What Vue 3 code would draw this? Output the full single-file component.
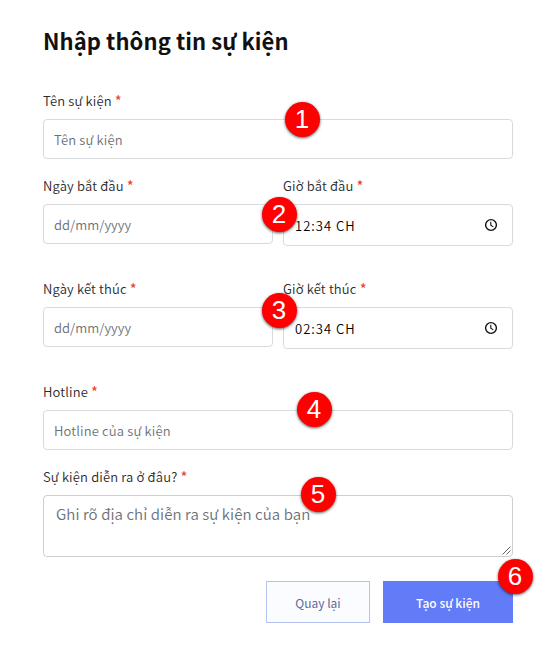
<script setup>
const rows = [
  { date: 'Ngày bắt đầu', time: 'Giờ bắt đầu', value: '12:34 CH', step: 2 },
  { date: 'Ngày kết thúc', time: 'Giờ kết thúc', value: '02:34 CH', step: 3 },
]
</script>

<template>
  <main class="page">
    <h1><span>Nhập thông tin sự kiện</span></h1>
    <form>
      <div class="field name">
        <label>Tên sự kiện <b>*</b></label>
        <div class="control placeholder">Tên sự kiện</div>
        <i class="badge b1">1</i>
      </div>
      <div v-for="row in rows" :key="row.step" class="row">
        <div class="field">
          <label>{{ row.date }} <b>*</b></label>
          <div class="control placeholder date">dd/mm/yyyy</div>
          <i class="badge" :class="'b' + row.step">{{ row.step }}</i>
        </div>
        <div class="field">
          <label>{{ row.time }} <b>*</b></label>
          <div class="control time">
            <span>{{ row.value }}</span>
            <svg width="14" height="14" viewBox="0 0 14 14" fill="none" stroke="#111">
              <circle cx="7" cy="7" r="5.4" stroke-width="1.4" />
              <path d="M6.8 3.7V7.3L9.3 8.9" stroke-width="1.1" />
            </svg>
          </div>
        </div>
      </div>
      <div class="field hotline">
        <label>Hotline <b>*</b></label>
        <div class="control placeholder">Hotline của sự kiện</div>
        <i class="badge b4">4</i>
      </div>
      <div class="field">
        <label class="place">Sự kiện diễn ra ở đâu? <b>*</b></label>
        <div class="control area">
          <span>Ghi rõ địa chỉ diễn ra sự kiện của bạn</span>
          <svg class="grip" width="9" height="9" viewBox="0 0 9 9" stroke="#555" fill="none">
            <path d="M.5 8.5L8.5 .5M4.5 8.5L8.5 4.5" stroke-width=".9" />
          </svg>
        </div>
        <i class="badge b5">5</i>
      </div>
      <div class="actions">
        <button type="button" class="back">Quay lại</button>
        <button type="button" class="create">Tạo sự kiện</button>
        <i class="badge b6">6</i>
      </div>
    </form>
  </main>
</template>

<style>
body { margin: 0; background: #fff; }
</style>

<style scoped>
* { box-sizing: border-box; }
.page {
  width: 556px;
  height: 646px;
  padding: 22px 43px 0;
  font-family: "Noto Sans CJK SC", "Noto Sans", sans-serif;
  font-size: 13px;
  font-weight: 350;
  letter-spacing: .16px;
  color: #2b2b2b;
  white-space: nowrap;
}
h1 {
  margin: 0 0 33px;
  height: 36px;
  font-size: 22px;
  line-height: 36px;
  font-weight: 700;
  letter-spacing: .08px;
  color: #111;
}
.field { position: relative; }
label { display: block; height: 20px; line-height: 20px; margin-bottom: 8px; }
label b { display: inline-block; color: #f03a2e; font-weight: 400; font-size: 15px; line-height: 1; transform: translateY(1px); }
.control {
  display: flex;
  align-items: center;
  height: 40px;
  padding: 0 10px;
  border: 1px solid #d9dadc;
  border-radius: 4px;
  background: #fff;
}
.placeholder { color: #6c7178; }
.date { letter-spacing: .05px; }
.name { margin-bottom: 17px; }
.row { display: grid; grid-template-columns: 230px 230px; gap: 10px; height: 103px; }
.time { height: 42px; padding: 1px 14px 0 11px; justify-content: space-between; color: #000; letter-spacing: 1px; }
.time svg { margin-top: -2px; }
.hotline { margin-bottom: 17px; }
.area {
  position: relative;
  height: 62px;
  align-items: flex-start;
  padding: 6px 12px;
  border-color: #cbcfd4;
  font-size: 15px;
  line-height: 24px;
  letter-spacing: .08px;
  color: #6c7178;
}
.grip { position: absolute; right: 1px; bottom: 1px; }
.actions { position: relative; display: flex; justify-content: flex-end; gap: 13px; margin-top: 24px; }
button {
  height: 42px;
  padding: 0;
  font: 500 12px "Noto Sans CJK SC", "Noto Sans", sans-serif;
  border: 1px solid #b5c3f2;
}
.back { width: 104px; background: #fafcff; color: #626994; font-weight: 400; }
.create { width: 130px; background: #627bf7; border-color: #627bf7; color: #fff; }
.badge {
  position: absolute;
  z-index: 2;
  width: 35px;
  height: 35px;
  border-radius: 50%;
  background: #f00;
  color: #fff;
  font: normal 26px/34px "Liberation Sans", Arial, sans-serif;
  letter-spacing: 0;
  text-align: center;
  box-shadow: 0 1px 3px rgba(0, 0, 0, .65);
}
.b1 { left: 241.5px; top: 11px; }
.b2 { left: 218.5px; top: 21px; }
.b3 { left: 218.5px; top: 14px; }
.b4 { left: 253.5px; top: 10px; }
.b5 { left: 257.5px; top: 10px; }
.b6 { left: 454.5px; top: -22.5px; }
</style>
